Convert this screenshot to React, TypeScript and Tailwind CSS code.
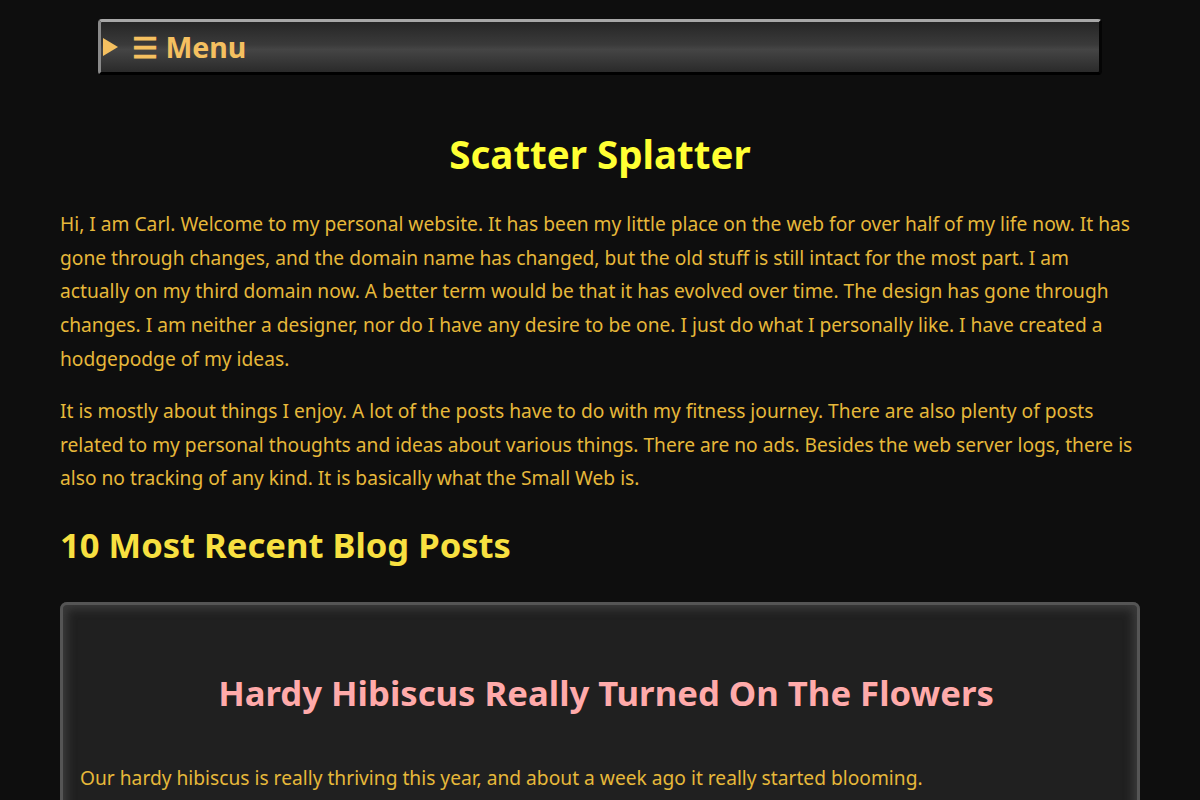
import React from "react";

export default function App() {
  return (
    <div className="min-h-[800px] bg-[#0e0e0e] text-[#e6b83a]" style={{ fontFamily: '"Noto Sans", "Open Sans", sans-serif' }}>
      <div className="px-[98px] pt-[19px]">
        <div className="h-[56px] rounded-[4px] border-t-[3px] border-l-[3px] border-b-[3px] border-r-[3px] border-t-[#a8a8a8] border-l-[#8a8a8a] border-b-[#000] border-r-[#050505] bg-[linear-gradient(180deg,#262626_0%,#3a3a3a_45%,#454545_55%,#2a2a2a_100%)] flex items-center">
          <span className="ml-[2px] w-0 h-0 border-y-[9px] border-y-transparent border-l-[15px] border-l-[#f5c060]" />
          <span className="ml-[14px] text-[28.5px] font-bold text-[#f5c060] leading-none">☰ Menu</span>
        </div>
      </div>
      <main className="px-[60px]">
        <h1 className="mt-[56px] text-center text-[38.5px] font-bold text-[#ffff33] leading-[1.2]">Scatter Splatter</h1>
        <p className="mt-[30px] text-[19.2px] leading-[33.6px]">
          Hi, I am Carl. Welcome to my personal website. It has been my little place on the web for over half of my life now. It has gone through changes, and the domain name has changed, but the old stuff is still intact for the most part. I am actually on my third domain now. A better term would be that it has evolved over time. The design has gone through changes. I am neither a designer, nor do I have any desire to be one. I just do what I personally like. I have created a hodgepodge of my ideas.
        </p>
        <p className="mt-[19px] text-[19.2px] leading-[33.6px]">
          It is mostly about things I enjoy. A lot of the posts have to do with my fitness journey. There are also plenty of posts related to my personal thoughts and ideas about various things. There are no ads. Besides the web server logs, there is also no tracking of any kind. It is basically what the Small Web is.
        </p>
        <h2 className="mt-[29px] text-[34.6px] font-bold text-[#f8e040] leading-[1.2]">10 Most Recent Blog Posts</h2>
        <div className="mt-[37px] rounded-[7px] bg-[#202020] shadow-[inset_0_0_0_3px_#555,inset_0_0_10px_7px_#3c3c3c] px-[20px] pt-[70px] pb-[40px]">
          <h3 className="ml-[12px] text-center text-[34.7px] font-bold text-[#ffaaaa] leading-[1.2]">Hardy Hibiscus Really Turned On The Flowers</h3>
          <p className="mt-[47px] text-[19.2px] leading-[33.6px]">Our hardy hibiscus is really thriving this year, and about a week ago it really started blooming.</p>
        </div>
      </main>
    </div>
  );
}
